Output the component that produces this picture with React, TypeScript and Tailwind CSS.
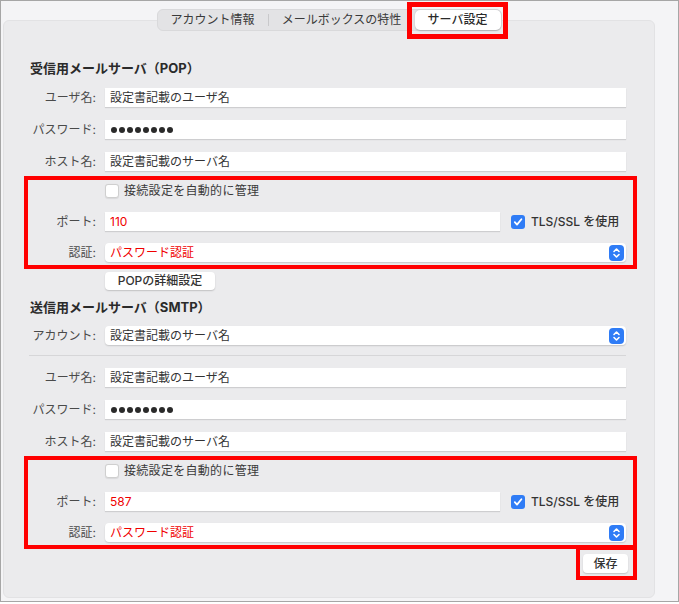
import React from "react";

function Label({ text }: { text: string }) {
  return (
    <div className="w-[92px] shrink-0 text-right text-[12px] leading-[19px] text-[#4a4a4a]">
      {text}
    </div>
  );
}

function TextField({
  value,
  red,
  width = "w-[521px]",
}: {
  value: string;
  red?: boolean;
  width?: string;
}) {
  return (
    <div
      className={`ml-[9px] h-[19px] ${width} bg-white pl-[5px] text-[12px] leading-[19px] shadow-[0_1px_1px_rgba(0,0,0,0.12)] ${
        red ? "text-[#f00000]" : "text-[#333333]"
      }`}
    >
      {value}
    </div>
  );
}

function PasswordField() {
  return (
    <div className="ml-[9px] flex h-[19px] w-[521px] items-center gap-[2px] bg-white pl-[6px] shadow-[0_1px_1px_rgba(0,0,0,0.12)]">
      {Array.from({ length: 8 }).map((_, i) => (
        <span key={i} className="h-[6px] w-[6px] rounded-full bg-[#2a2a2a]" />
      ))}
    </div>
  );
}

function Stepper() {
  return (
    <span className="flex h-[16px] w-[15px] items-center justify-center rounded-[4px] bg-[#2f7cf6]">
      <svg width="9" height="12" viewBox="0 0 9 12" fill="none">
        <path d="M2 4.5 L4.5 2 L7 4.5" stroke="white" strokeWidth="1.6" strokeLinecap="round" strokeLinejoin="round" />
        <path d="M2 7.5 L4.5 10 L7 7.5" stroke="white" strokeWidth="1.6" strokeLinecap="round" strokeLinejoin="round" />
      </svg>
    </span>
  );
}

function Select({ value, red }: { value: string; red?: boolean }) {
  return (
    <div
      className={`ml-[9px] flex h-[19px] w-[521px] items-center justify-between rounded-[4px] bg-white pl-[5px] pr-[2px] text-[12px] leading-[19px] shadow-[0_1px_1.5px_rgba(0,0,0,0.16)] ${
        red ? "text-[#f00000]" : "text-[#333333]"
      }`}
    >
      <span>{value}</span>
      <Stepper />
    </div>
  );
}

function Checkbox({ checked }: { checked?: boolean }) {
  if (checked) {
    return (
      <span className="flex h-[14px] w-[14px] shrink-0 items-center justify-center rounded-[3px] bg-[#2f7cf6]">
        <svg width="10" height="10" viewBox="0 0 10 10" fill="none">
          <path d="M1.8 5.2 L4 7.6 L8.4 2.2" stroke="white" strokeWidth="1.8" strokeLinecap="round" strokeLinejoin="round" />
        </svg>
      </span>
    );
  }
  return (
    <span className="h-[14px] w-[14px] shrink-0 rounded-[3px] border border-[#cfcfcf] bg-white shadow-[0_0.5px_1px_rgba(0,0,0,0.08)]" />
  );
}

function Row({ label, children, className = "" }: { label: string; children: React.ReactNode; className?: string }) {
  return (
    <div className={`flex h-[19px] items-center ${className}`}>
      <Label text={label} />
      {children}
    </div>
  );
}

function ConnectionBox({ port, top }: { port: string; top: string }) {
  return (
    <div className={`relative ${top}`}>
      <div className="ml-[101px] flex h-[14px] items-center">
        <Checkbox />
        <span className="ml-[5px] text-[12px] leading-[14px] tracking-[0.3px] text-[#3a3a3a]">
          接続設定を自動的に管理
        </span>
      </div>
      <Row label="ポート:" className="mt-[14px]">
        <TextField value={port} red width="w-[395px]" />
        <span className="ml-[11px]">
          <Checkbox checked />
        </span>
        <span className="ml-[6px] text-[12px] font-medium leading-[19px] text-[#333333]">TLS/SSL を使用</span>
      </Row>
      <Row label="認証:" className="mt-[12px]">
        <Select value="パスワード認証" red />
      </Row>
      <div className="pointer-events-none absolute bottom-[-7px] left-[20px] top-[-8px] w-[613px] border-4 border-[#ff0000]" />
    </div>
  );
}

export default function App() {
  return (
    <div className="h-[604px] w-[679px] bg-white font-['Inter','Noto_Sans_CJK_JP',sans-serif]">
      <div className="h-[602px] w-[679px] border border-[#a6a6a6] bg-[#f4f4f6]">
        <div className="ml-[2px] mt-[19px] flex h-[578px] w-[652px] flex-col rounded-[6px] border border-[#e2e2e4] bg-[#ebebed]">
          {/* tabs */}
          <div className="mx-auto -mt-[12px] flex h-[22px] items-center rounded-[6px] border border-[#d9d9db] bg-[#e3e3e5] text-[12px] text-[#3a3a3a]">
            <div className="w-[110px] text-center leading-[20px]">アカウント情報</div>
            <div className="h-[12px] w-px bg-[#c9c9cb]" />
            <div className="w-[146px] text-center leading-[20px]">メールボックスの特性</div>
            <div className="relative h-[20px] w-[86px] rounded-[5px] bg-white text-center font-medium leading-[20px] text-[#2a2a2a] shadow-[0_0.5px_1.5px_rgba(0,0,0,0.2)]">
              サーバ設定
              <div className="pointer-events-none absolute bottom-[-9px] left-[-8px] right-[-7px] top-[-8px] border-[5px] border-[#ff0000]" />
            </div>
          </div>

          {/* incoming */}
          <div className="ml-[26px] mt-[28px] h-[18px] text-[13px] font-bold leading-[18px] text-[#2a2a2a]">
            受信用メールサーバ（POP）
          </div>
          <Row label="ユーザ名:" className="mt-[11px]">
            <TextField value="設定書記載のユーザ名" />
          </Row>
          <Row label="パスワード:" className="mt-[13px]">
            <PasswordField />
          </Row>
          <Row label="ホスト名:" className="mt-[13px]">
            <TextField value="設定書記載のサーバ名" />
          </Row>
          <ConnectionBox port="110" top="mt-[13px]" />
          <div className="ml-[101px] mt-[10px] h-[18px] w-[110px] rounded-[4px] bg-white text-center text-[12px] font-medium leading-[18px] text-[#333333] shadow-[0_1px_1.5px_rgba(0,0,0,0.18)]">
            POPの詳細設定
          </div>

          {/* outgoing */}
          <div className="ml-[26px] mt-[8px] h-[18px] text-[13px] font-bold leading-[18px] text-[#2a2a2a]">
            送信用メールサーバ（SMTP）
          </div>
          <Row label="アカウント:" className="mt-[10px]">
            <Select value="設定書記載のサーバ名" />
          </Row>
          <div className="ml-[25px] mt-[10px] h-px w-[597px] bg-[#d6d6d8]" />
          <Row label="ユーザ名:" className="mt-[12px]">
            <TextField value="設定書記載のユーザ名" />
          </Row>
          <Row label="パスワード:" className="mt-[13px]">
            <PasswordField />
          </Row>
          <Row label="ホスト名:" className="mt-[13px]">
            <TextField value="設定書記載のサーバ名" />
          </Row>
          <ConnectionBox port="587" top="mt-[13px]" />

          <div className="relative ml-[579px] mt-[12px] h-[19px] w-[45px] rounded-[4px] bg-white text-center text-[12px] font-medium leading-[19px] text-[#333333] shadow-[0_1px_1.5px_rgba(0,0,0,0.18)]">
            保存
            <div className="pointer-events-none absolute bottom-[-7px] left-[-7px] right-[-9px] top-[-8px] border-4 border-[#ff0000]" />
          </div>
        </div>
      </div>
    </div>
  );
}
